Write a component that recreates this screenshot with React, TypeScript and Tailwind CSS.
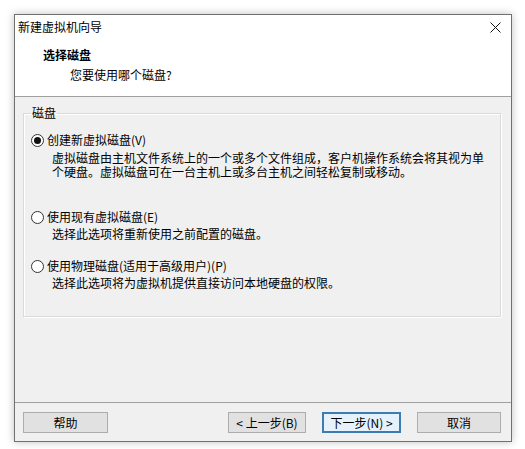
const font = { fontFamily: '"Noto Sans CJK SC", "Noto Sans", sans-serif' };

type Option = {
  label: string;
  desc: string[];
  checked?: boolean;
  labelGap: string;
};

const options: Option[] = [
  {
    label: "创建新虚拟磁盘(V)",
    desc: [
      "虚拟磁盘由主机文件系统上的一个或多个文件组成，客户机操作系统会将其视为单",
      "个硬盘。虚拟磁盘可在一台主机上或多台主机之间轻松复制或移动。",
    ],
    checked: true,
    labelGap: "mt-[11px]",
  },
  {
    label: "使用现有虚拟磁盘(E)",
    desc: ["选择此选项将重新使用之前配置的磁盘。"],
    labelGap: "mt-[30px]",
  },
  {
    label: "使用物理磁盘(适用于高级用户)(P)",
    desc: ["选择此选项将为虚拟机提供直接访问本地硬盘的权限。"],
    labelGap: "mt-[17px]",
  },
];

function Radio({ checked }: { checked?: boolean }) {
  return (
    <span className="flex h-[13px] w-[13px] shrink-0 items-center justify-center rounded-full border border-[#333] bg-white">
      {checked && <span className="h-[7px] w-[7px] rounded-full bg-[#111]" />}
    </span>
  );
}

function Button({ label, width, primary }: { label: string; width: string; primary?: boolean }) {
  return (
    <button
      className={`flex h-[21px] items-center justify-center text-[12px] text-black ${width} ${
        primary
          ? "border-2 border-[#3c7cb0] bg-[#e5f1fb]"
          : "border border-[#adadad] bg-[#e1e1e1]"
      }`}
    >
      {label}
    </button>
  );
}

export default function App() {
  return (
    <div className="h-[449px] w-[525px] overflow-hidden bg-white pl-[14px] pt-[14px]" style={font}>
      <div className="flex h-[428px] w-[498px] flex-col border border-[#707070] bg-[#f0f0f0] shadow-[0_0_8px_rgba(0,0,0,0.25)]">
        {/* title + header */}
        <div className="border-b border-[#a0a0a0] bg-white">
          <div className="flex h-[24px] items-center justify-between pl-[3px] pr-[8px]">
            <span className="text-[12px] leading-[16px] text-black">新建虚拟机向导</span>
            <svg width="11" height="11" viewBox="0 0 11 11" className="mr-[2px]">
              <path d="M0.5 0.5 L10.5 10.5 M10.5 0.5 L0.5 10.5" stroke="#111" strokeWidth="1" />
            </svg>
          </div>
          <div className="h-[57px] pl-[28px] pt-[8px]">
            <p className="text-[12px] font-bold leading-[16px] text-black">选择磁盘</p>
            <p className="ml-[27px] mt-[4px] text-[12px] leading-[16px] text-black">您要使用哪个磁盘?</p>
          </div>
        </div>

        {/* body */}
        <fieldset className="ml-[8px] mt-[8px] h-[212px] w-[478px] border border-[#dadada] pl-[7px] shadow-[1px_1px_0_#fff,inset_1px_1px_0_#fff]">
          <legend className="px-[1px] text-[12px] leading-[16px] text-black">磁盘</legend>
          {options.map((o) => (
            <div key={o.label} className={o.labelGap}>
              <div className="flex items-center gap-[3px]">
                <Radio checked={o.checked} />
                <span className="text-[12px] leading-[16px] text-black">{o.label}</span>
              </div>
              <p className={`whitespace-nowrap pl-[21px] text-[12px] leading-[14px] text-black ${o.checked ? "mt-[3px]" : "mt-[2px]"}`}>
                {o.desc.map((d, i) => (
                  <span key={d}>
                    {i > 0 && <br />}
                    {d}
                  </span>
                ))}
              </p>
            </div>
          ))}
        </fieldset>

        {/* footer */}
        <div className="mt-auto flex items-start border-t border-[#a0a0a0] pb-[8px] pl-[8px] pr-[10px] pt-[9px]">
          <Button label="帮助" width="w-[85px]" />
          <div className="flex-1" />
          <div className="flex gap-[16px]">
            <Button label="< 上一步(B)" width="w-[78px]" />
            <Button label="下一步(N) >" width="w-[79px]" primary />
            <Button label="取消" width="w-[84px]" />
          </div>
        </div>
      </div>
    </div>
  );
}
